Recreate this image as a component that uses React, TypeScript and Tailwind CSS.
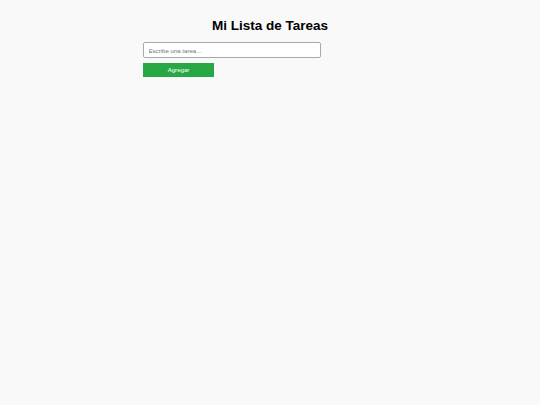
export default function App() {
  return (
    <div className="min-h-screen bg-[#f9f9f9] pt-[18px] font-['Liberation_Sans',Arial,sans-serif] text-black">
      <div className="mx-auto w-[254px]">
        {/* Title */}
        <h1 className="text-center text-[13.5px] font-bold leading-[15.5px] mb-[8.5px]">
          Mi Lista de Tareas
        </h1>

        {/* New task form */}
        <input
          type="text"
          placeholder="Escribe una tarea..."
          className="block w-[178px] h-[16px] border border-[#aaa] rounded-[2px] bg-white px-[4.5px] text-[6.1px] placeholder:text-[#757575] outline-none"
        />
        <button className="mt-[5px] block w-[71px] h-[14px] bg-[#28a745] text-white text-[6.1px]">
          Agregar
        </button>
      </div>
    </div>
  );
}
